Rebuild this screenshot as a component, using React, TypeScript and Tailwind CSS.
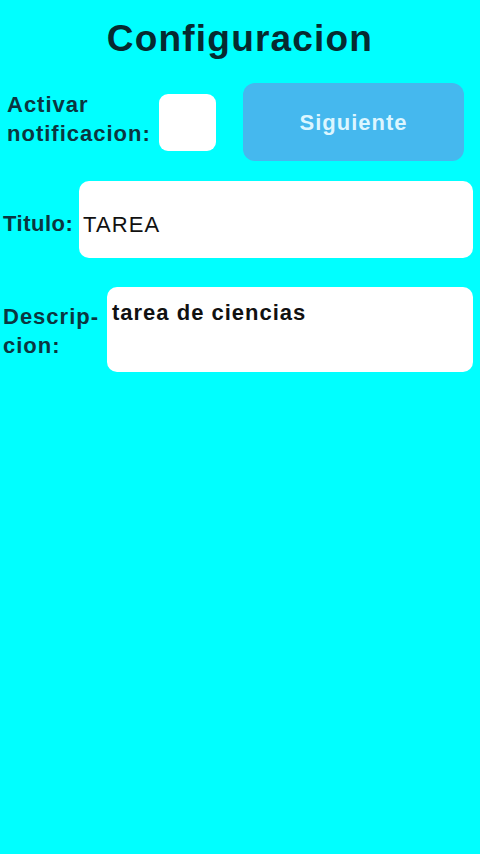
import { useState } from "react";

export default function App() {
  const [notify, setNotify] = useState(false);
  const [title, setTitle] = useState("TAREA");
  const [desc, setDesc] = useState("tarea de ciencias");

  return (
    <div className="min-h-[854px] w-full bg-[#00ffff] font-['Liberation_Sans',Arial,sans-serif] text-[#0b3640]">
      <h1 className="pt-[17px] text-center text-[37px] font-bold leading-[44px] tracking-[1.2px] text-[#062a30]">
        Configuracion
      </h1>

      <div className="mt-[22px] flex items-center pl-[7px]">
        <label className="w-[146px] pb-[6px] text-[22px] font-bold leading-[29px] tracking-[1px]">
          Activar
          <br />
          notificacion:
        </label>
        <button
          onClick={() => setNotify(!notify)}
          className="ml-[6px] h-[57px] w-[57px] rounded-[9px] bg-white"
        >
          {notify && <span className="text-[28px] text-[#0b3640]">✓</span>}
        </button>
        <button className="ml-[27px] h-[78px] w-[221px] rounded-[12px] bg-[#45b8ee] text-[22px] font-bold tracking-[1px] text-[#dcf6ff]">
          Siguiente
        </button>
      </div>

      <div className="mt-[20px] flex items-start pl-[3px] pr-[7px]">
        <label className="w-[76px] shrink-0 pt-[29px] text-[22px] font-bold leading-[28px] tracking-[0.5px]">
          Titulo:
        </label>
        <input
          value={title}
          onChange={(e) => setTitle(e.target.value)}
          className="h-[77px] min-w-0 flex-1 rounded-[10px] bg-white px-[4px] pt-[10px] text-[22px] leading-[28px] tracking-[1.1px] text-[#111] outline-none"
        />
      </div>

      <div className="mt-[29px] flex items-start pl-[3px] pr-[7px]">
        <label className="w-[104px] shrink-0 pt-[15px] text-[22px] font-bold leading-[29px] tracking-[1px]">
          Descrip-
          <br />
          cion:
        </label>
        <textarea
          value={desc}
          onChange={(e) => setDesc(e.target.value)}
          className="h-[85px] min-w-0 flex-1 resize-none rounded-[10px] bg-white px-[5px] pt-[12px] text-[22px] font-bold leading-[28px] tracking-[1px] text-[#111] outline-none"
        />
      </div>
    </div>
  );
}
